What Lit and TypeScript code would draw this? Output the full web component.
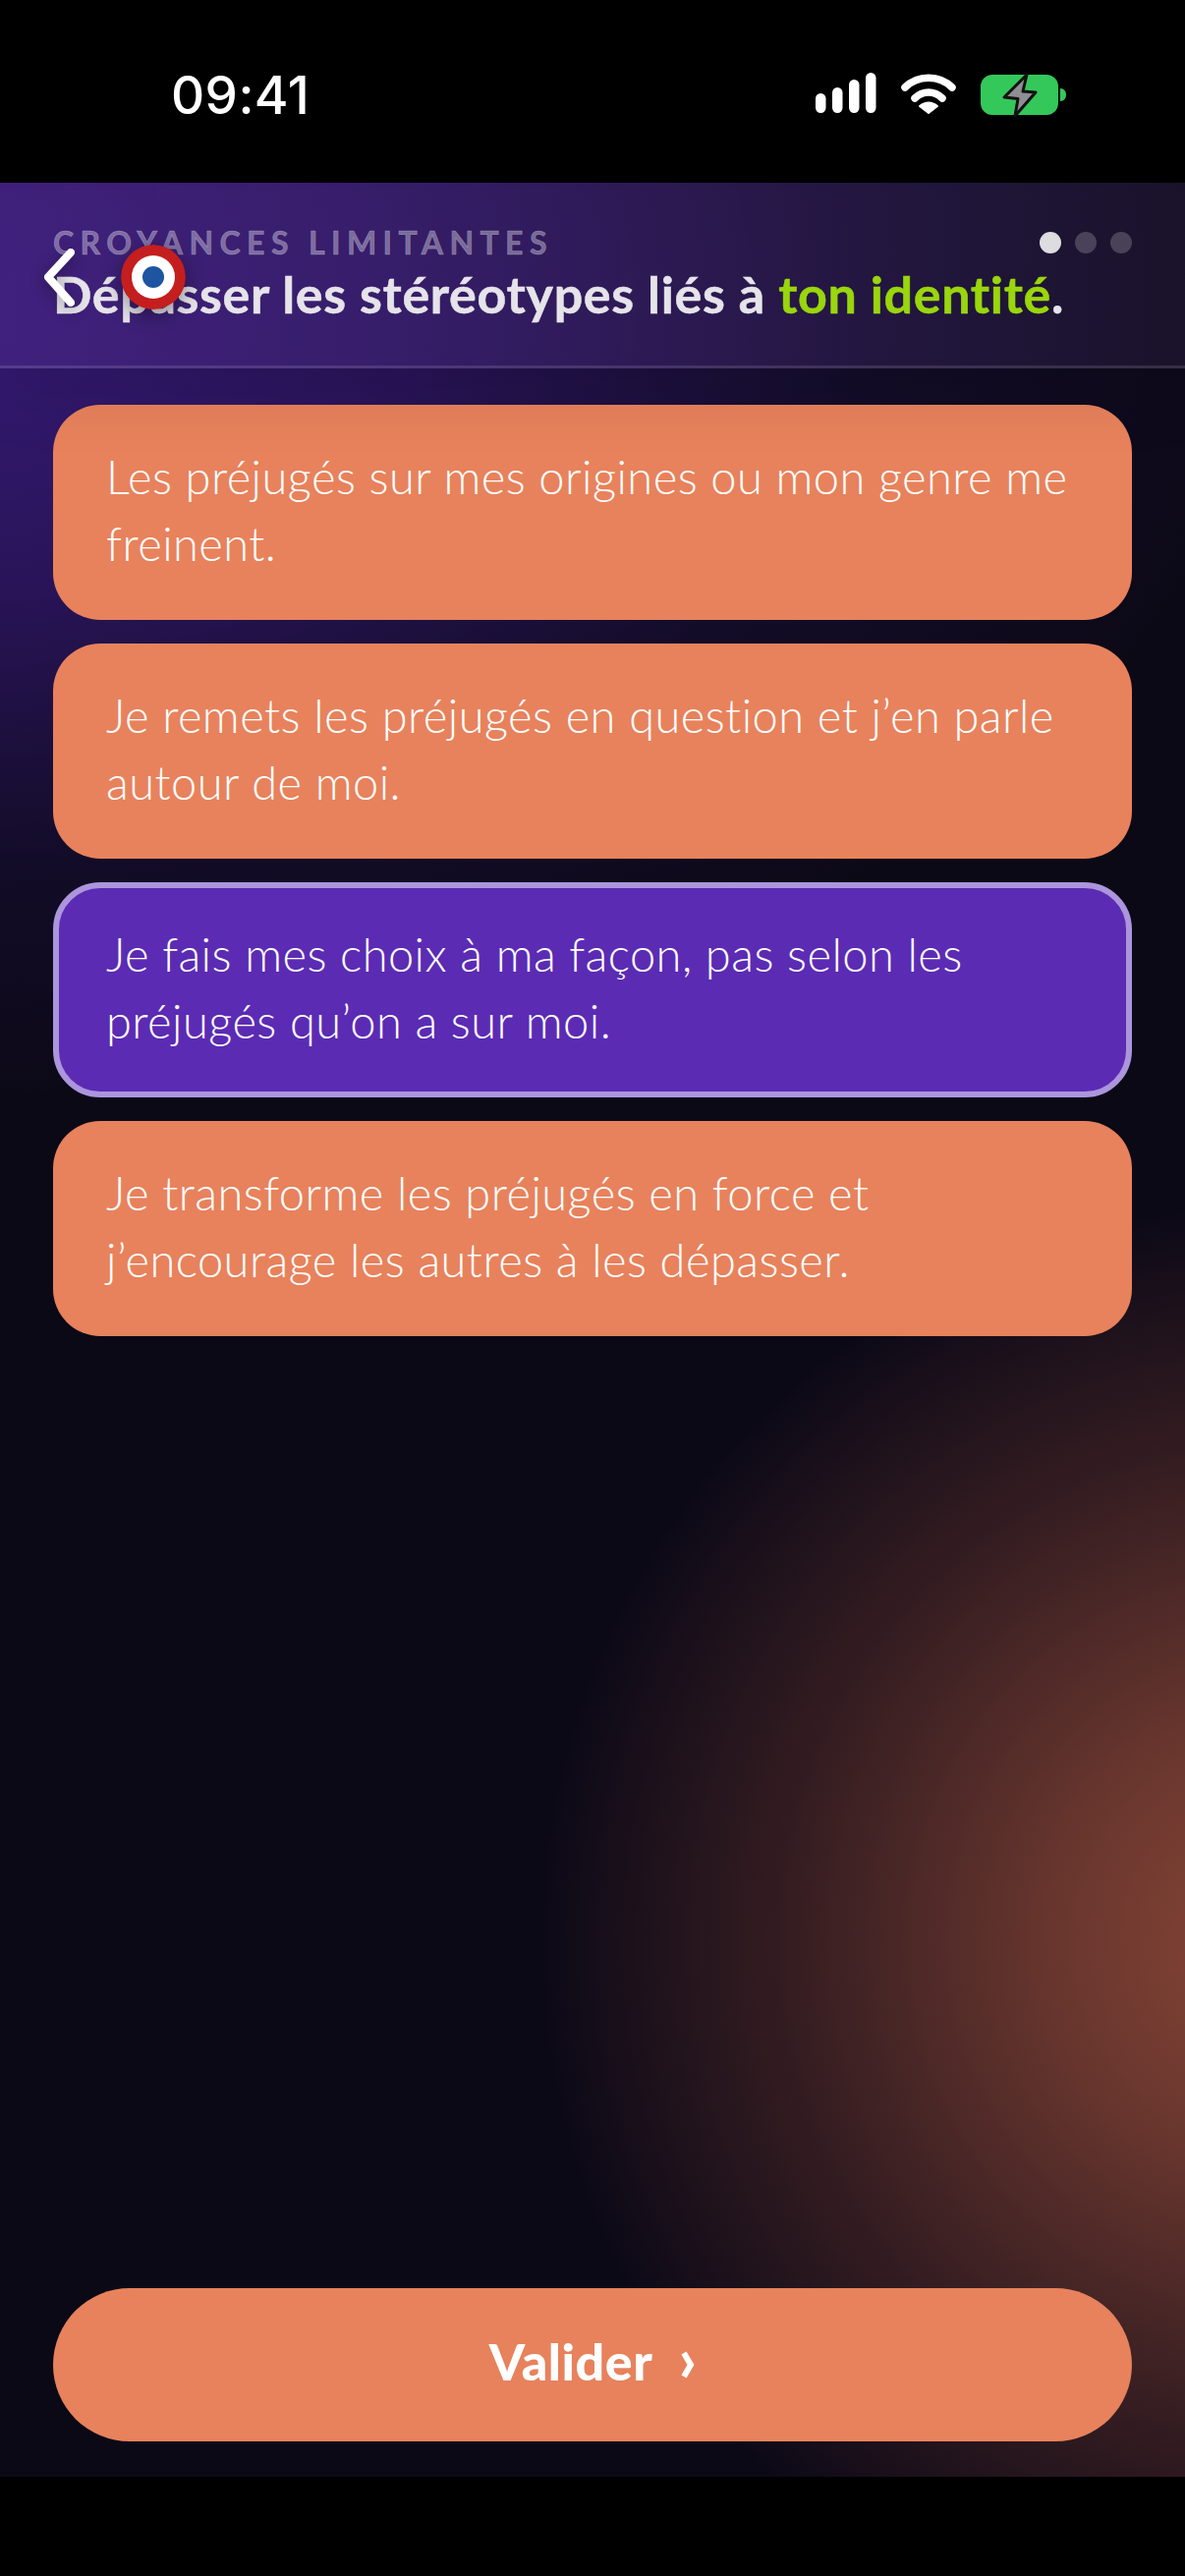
import { LitElement, css, html } from 'lit'
import { customElement, property } from 'lit/decorators.js'

const OPTIONS = [
  'Les préjugés sur mes origines ou mon genre me freinent.',
  'Je remets les préjugés en question et j’en parle autour de moi.',
  'Je fais mes choix à ma façon, pas selon les préjugés qu’on a sur moi.',
  'Je transforme les préjugés en force et j’encourage les autres à les dépasser.',
]

@customElement('app-root')
export class AppRoot extends LitElement {
  @property({ type: Number })
  selected = 2

  static styles = css`
    :host {
      display: flex;
      flex-direction: column;
      width: 1206px;
      height: 2622px;
      overflow: hidden;
      background: #000;
      color: #fff;
      font-family: Lato, 'Open Sans', sans-serif;
    }

    .status {
      flex: 0 0 186px;
      box-sizing: border-box;
      display: flex;
      align-items: flex-start;
      justify-content: space-between;
      padding: 70px 120px 0 174px;
    }

    .time {
      font-family: Inter, sans-serif;
      font-weight: 500;
      font-size: 53px;
      line-height: 54px;
      letter-spacing: 0.4px;
    }

    .status-icons {
      display: flex;
      align-items: flex-start;
      gap: 25px;
      margin-top: 4px;
    }

    .screen {
      flex: 1;
      position: relative;
      display: flex;
      flex-direction: column;
      background:
        radial-gradient(circle 750px at 1300px 1790px, rgba(137, 70, 54, 1) 0%, rgba(137, 70, 54, 0.74) 30%, rgba(137, 70, 54, 0.34) 65%, rgba(137, 70, 54, 0.1) 90%, rgba(137, 70, 54, 0) 100%),
        radial-gradient(ellipse 1350px 800px at -60px 130px, rgba(54, 26, 118, 1) 0%, rgba(46, 22, 100, 0.85) 35%, rgba(26, 15, 58, 0.5) 70%, rgba(12, 9, 23, 0) 100%),
        #0c0917;
    }

    .header {
      position: relative;
      box-sizing: border-box;
      height: 189px;
      padding: 46px 54px 0;
      border-bottom: 3px solid rgba(255, 255, 255, 0.12);
      background: linear-gradient(90deg, rgba(72, 38, 134, 0.6), rgba(48, 36, 72, 0.35));
      box-shadow: 0 24px 70px rgba(0, 0, 0, 0.1);
      z-index: 1;
    }

    .header-top {
      display: flex;
      align-items: center;
      justify-content: space-between;
    }

    .eyebrow {
      font-weight: 700;
      font-size: 32px;
      line-height: 30px;
      letter-spacing: 6.4px;
      -webkit-text-stroke: 0.6px currentColor;
      color: rgba(255, 255, 255, 0.34);
    }

    .dots {
      display: flex;
      gap: 14px;
    }

    .dot {
      width: 22px;
      height: 22px;
      border-radius: 50%;
      background: rgba(255, 255, 255, 0.2);
    }

    .dot.on {
      background: #dddcdf;
    }

    .title {
      margin: 7px 0 0;
      font-weight: 700;
      font-size: 52px;
      line-height: 60px;
      letter-spacing: 0.66px;
      white-space: nowrap;
      -webkit-text-stroke: 0.5px currentColor;
      color: #e6e4ea;
    }

    .title em {
      font-style: normal;
      color: #9ad60d;
    }

    .back {
      position: absolute;
      left: 41px;
      top: 66px;
      z-index: 2;
      filter: drop-shadow(0 4px 8px rgba(0, 0, 0, 0.35));
    }

    .cocarde {
      position: absolute;
      left: 123px;
      top: 63px;
      width: 66px;
      height: 66px;
      z-index: 2;
      border-radius: 50%;
      filter: drop-shadow(0 6px 10px rgba(0, 0, 0, 0.4));
    }

    .options {
      display: flex;
      flex-direction: column;
      gap: 24px;
      padding: 37px 54px 0;
    }

    .option {
      box-sizing: border-box;
      height: 219px;
      padding: 39px 50px 0 54px;
      border-radius: 48px;
      background: #e7825c;
      font-weight: 300;
      font-size: 47px;
      line-height: 68px;
      letter-spacing: 0.45px;
    }

    .option.sel {
      padding: 33px 44px 0 48px;
      background: #5b2bb3;
      border: 6px solid #ab95dc;
    }

    .footer {
      margin-top: auto;
      padding: 0 54px 36px;
    }

    .validate {
      display: flex;
      align-items: center;
      justify-content: center;
      gap: 28px;
      height: 156px;
      padding-bottom: 8px;
      box-sizing: border-box;
      border-radius: 78px;
      background: #e7825c;
      font-weight: 900;
      font-size: 52px;
      letter-spacing: 0.5px;
    }

    .validate svg {
      margin-top: 8px;
    }
  `

  render() {
    return html`
      <div class="status">
        <div class="time">09:41</div>
        <div class="status-icons">
          <svg width="62" height="42" viewBox="0 0 62 42" fill="#fff">
            <rect x="0" y="21" width="10.500" height="20" rx="5.200" />
            <rect x="17" y="15" width="10.500" height="26" rx="5.200" />
            <rect x="34" y="7" width="10.500" height="34" rx="5.200" />
            <rect x="51" y="0" width="10.500" height="41" rx="5.200" />
          </svg>
          <svg width="56" height="44" viewBox="0 0 56 44">
            <path d="M4 15C17 2 39 2 52 15" fill="none" stroke="#fff" stroke-width="7.500" stroke-linecap="round" />
            <path d="M14 26C22 18 34 18 42 26" fill="none" stroke="#fff" stroke-width="7.500" stroke-linecap="round" />
            <path d="M28 41L19 34Q28 27 37 34Z" fill="#fff" stroke="#fff" stroke-width="2" stroke-linejoin="round" />
          </svg>
          <svg width="88" height="46" viewBox="0 0 88 46">
            <rect x="0" y="2" width="79" height="41" rx="12" fill="#34c85a" />
            <path d="M81 16C85 16 87 19 87 22.500C87 26 85 29 81 29Z" fill="#34c85a" />
            <path d="M47 2L24 25L38 26.500L35 44L56 20L43 19Z" fill="#8e8e93" stroke="#111" stroke-width="3" stroke-linejoin="round" />
          </svg>
        </div>
      </div>
      <div class="screen">
        <div class="header">
          <div class="header-top">
            <div class="eyebrow">CROYANCES LIMITANTES</div>
            <div class="dots">
              <span class="dot on"></span>
              <span class="dot"></span>
              <span class="dot"></span>
            </div>
          </div>
          <h1 class="title">Dépasser les stéréotypes liés à <em>ton identité</em>.</h1>
        </div>
        <svg class="back" width="36" height="62" viewBox="0 0 36 62" fill="none">
          <path d="M31 5L8 30L31 56" stroke="#fff" stroke-width="8" stroke-linecap="round" stroke-linejoin="round" />
        </svg>
        <svg class="cocarde" viewBox="0 0 66 66">
          <circle cx="33" cy="33" r="33" fill="#c41e1f" />
          <circle cx="33" cy="33" r="22" fill="#fff" />
          <circle cx="33" cy="33" r="11" fill="#1d55a1" />
        </svg>
        <div class="options">
          ${OPTIONS.map((text, i) => html`<div class="option ${i === this.selected ? 'sel' : ''}">${text}</div>`)}
        </div>
        <div class="footer">
          <div class="validate">
            <span>Valider</span>
            <svg width="16" height="28" viewBox="0 0 16 28" fill="none">
              <path d="M4 2L11 14L4 26" stroke="#fff" stroke-width="6" />
            </svg>
          </div>
        </div>
      </div>
      <div style="flex: 0 0 101px"></div>
    `
  }
}
